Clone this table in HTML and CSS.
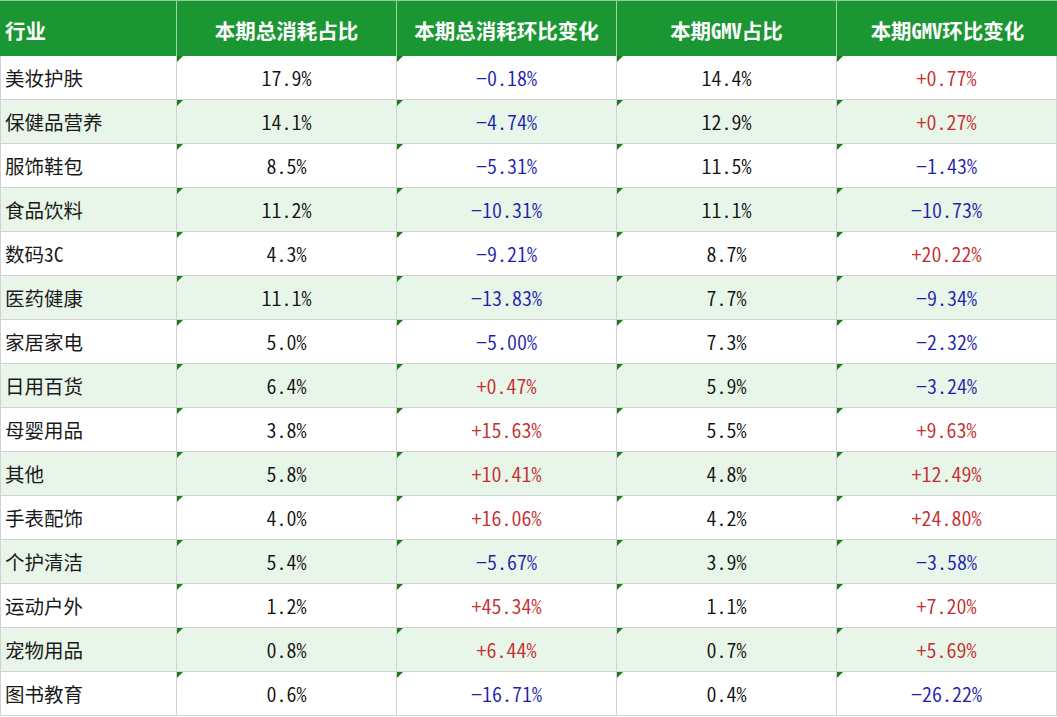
FILE: index.html
```html
<!DOCTYPE html>
<html lang="zh">
<head>
<meta charset="utf-8">
<title>行业数据</title>
<link rel="stylesheet" href="styles.css">
</head>
<body>
<div class="sheet">
  <div class="head">
    <div class="hc first">行业</div>
    <div class="hc">本期总消耗占比</div>
    <div class="hc">本期总消耗环比变化</div>
    <div class="hc">本期GMV占比</div>
    <div class="hc">本期GMV环比变化</div>
  </div>
  <div class="body">
    <div class="c name">美妆护肤</div><div class="c n">17.9%</div><div class="c n neg">−0.18%</div><div class="c n">14.4%</div><div class="c n pos">+0.77%</div>
    <div class="c name alt">保健品营养</div><div class="c n alt">14.1%</div><div class="c n neg alt">−4.74%</div><div class="c n alt">12.9%</div><div class="c n pos alt">+0.27%</div>
    <div class="c name">服饰鞋包</div><div class="c n">8.5%</div><div class="c n neg">−5.31%</div><div class="c n">11.5%</div><div class="c n neg">−1.43%</div>
    <div class="c name alt">食品饮料</div><div class="c n alt">11.2%</div><div class="c n neg alt">−10.31%</div><div class="c n alt">11.1%</div><div class="c n neg alt">−10.73%</div>
    <div class="c name">数码3C</div><div class="c n">4.3%</div><div class="c n neg">−9.21%</div><div class="c n">8.7%</div><div class="c n pos">+20.22%</div>
    <div class="c name alt">医药健康</div><div class="c n alt">11.1%</div><div class="c n neg alt">−13.83%</div><div class="c n alt">7.7%</div><div class="c n neg alt">−9.34%</div>
    <div class="c name">家居家电</div><div class="c n">5.0%</div><div class="c n neg">−5.00%</div><div class="c n">7.3%</div><div class="c n neg">−2.32%</div>
    <div class="c name alt">日用百货</div><div class="c n alt">6.4%</div><div class="c n pos alt">+0.47%</div><div class="c n alt">5.9%</div><div class="c n neg alt">−3.24%</div>
    <div class="c name">母婴用品</div><div class="c n">3.8%</div><div class="c n pos">+15.63%</div><div class="c n">5.5%</div><div class="c n pos">+9.63%</div>
    <div class="c name alt">其他</div><div class="c n alt">5.8%</div><div class="c n pos alt">+10.41%</div><div class="c n alt">4.8%</div><div class="c n pos alt">+12.49%</div>
    <div class="c name">手表配饰</div><div class="c n">4.0%</div><div class="c n pos">+16.06%</div><div class="c n">4.2%</div><div class="c n pos">+24.80%</div>
    <div class="c name alt">个护清洁</div><div class="c n alt">5.4%</div><div class="c n neg alt">−5.67%</div><div class="c n alt">3.9%</div><div class="c n neg alt">−3.58%</div>
    <div class="c name">运动户外</div><div class="c n">1.2%</div><div class="c n pos">+45.34%</div><div class="c n">1.1%</div><div class="c n pos">+7.20%</div>
    <div class="c name alt">宠物用品</div><div class="c n alt">0.8%</div><div class="c n pos alt">+6.44%</div><div class="c n alt">0.7%</div><div class="c n pos alt">+5.69%</div>
    <div class="c name">图书教育</div><div class="c n">0.6%</div><div class="c n neg">−16.71%</div><div class="c n">0.4%</div><div class="c n neg">−26.22%</div>
  </div>
</div>
</body>
</html>
```

FILE: styles.css
```css
html, body {
  margin: 0;
  padding: 0;
  background: #ffffff;
}
body {
  font-family: "Noto Sans CJK SC", "DejaVu Sans", sans-serif;
  font-feature-settings: "hwid" 1;
  color: #1a1a1a;
}
.sheet {
  width: 1057px;
  height: 717px;
  overflow: hidden;
}
.head {
  display: grid;
  grid-template-columns: 176px 219px 219px 219px 221px;
  column-gap: 1px;
  background: #9fd6a8;
  height: 56px;
  border-top: 1px solid #8fcf9a;
  box-sizing: border-box;
}
.hc {
  background: #1a9632;
  color: #ffffff;
  font-weight: 700;
  font-size: 20.5px;
  display: flex;
  align-items: center;
  justify-content: center;
  padding-top: 2px;
}
.hc.first {
  justify-content: flex-start;
  padding-left: 5px;
}
.body {
  display: grid;
  grid-template-columns: 175px 219px 219px 219px 219px;
  grid-auto-rows: 43px;
  gap: 1px;
  background: #d2d2d2;
  padding: 0 1px 1px 1px;
  width: 1057px;
  box-sizing: border-box;
}
.c {
  background: #ffffff;
  display: flex;
  align-items: center;
  font-size: 19.5px;
  position: relative;
}
.c.alt {
  background: #e8f5e9;
}
.name {
  padding-left: 4px;
}
.n {
  justify-content: center;
  font-size: 20px;
  font-weight: 350;
  color: #111111;
}
.n::before {
  content: "";
  position: absolute;
  left: 0;
  top: 0;
  border-top: 6px solid #1f7a1f;
  border-right: 6px solid transparent;
}
.n.neg {
  color: #1f1fae;
}
.n.pos {
  color: #c42e2e;
}
```
